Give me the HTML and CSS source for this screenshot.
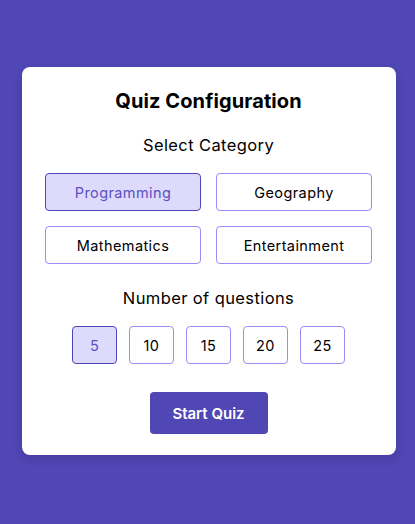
FILE: index.html
```html
<!DOCTYPE html>
<html lang="en">
<head>
<meta charset="utf-8">
<title>Quiz Configuration</title>
<link rel="stylesheet" href="styles.css">
</head>
<body>
<main class="page">
  <section class="card">
    <h1 class="title">Quiz Configuration</h1>
    <h2 class="label">Select Category</h2>
    <div class="categories">
      <button class="opt cat selected">Programming</button>
      <button class="opt cat">Geography</button>
      <button class="opt cat">Mathematics</button>
      <button class="opt cat">Entertainment</button>
    </div>
    <h2 class="label label-num">Number of questions</h2>
    <div class="numbers">
      <button class="opt num selected">5</button>
      <button class="opt num">10</button>
      <button class="opt num">15</button>
      <button class="opt num">20</button>
      <button class="opt num">25</button>
    </div>
    <button class="start">Start Quiz</button>
  </section>
</main>
</body>
</html>
```
FILE: styles.css
```css
* { box-sizing: border-box; }
html, body { margin: 0; padding: 0; }
body {
  background: #5046b4;
  font-family: Inter, "Open Sans", sans-serif;
  color: #000;
  height: 524px;
  overflow: hidden;
}
.page {
  padding: 67px 0 0 22px;
  display: flex;
}
.card {
  width: 374px;
  background: #fff;
  border-radius: 8px;
  padding: 22px 24px 21px 23px;
  display: flex;
  flex-direction: column;
  align-items: center;
  box-shadow: 0 4px 10px rgba(0,0,0,0.12);
}
.title {
  margin: 0;
  font-size: 20px;
  line-height: 24px;
  font-weight: 700;
  letter-spacing: 0.1px;
}
.label {
  margin: 22px 0 0;
  font-size: 16.5px;
  line-height: 20px;
  font-weight: 400;
  letter-spacing: 0.4px;
}
.label.label-num { margin-top: 24px; }
.categories {
  margin-top: 18px;
  width: 100%;
  display: grid;
  grid-template-columns: 156px 156px;
  justify-content: space-between;
  row-gap: 15px;
}
.opt {
  font-family: inherit;
  background: #fff;
  border: 1px solid #9d8cf6;
  border-radius: 4px;
  color: #000;
  font-size: 14.5px;
  letter-spacing: 0.4px;
  height: 38px;
  padding: 0;
  cursor: pointer;
}
.opt.selected {
  background: #dedafb;
  border-color: #4f46b5;
  color: #5b50c2;
}
.numbers {
  margin-top: 18px;
  display: flex;
  gap: 12px;
}
.num { width: 45px; }
.start {
  margin-top: 28px;
  width: 118px;
  height: 42px;
  border: none;
  border-radius: 4px;
  background: #5046b4;
  color: #fff;
  font-family: inherit;
  font-size: 15px;
  font-weight: 600;
}
```
